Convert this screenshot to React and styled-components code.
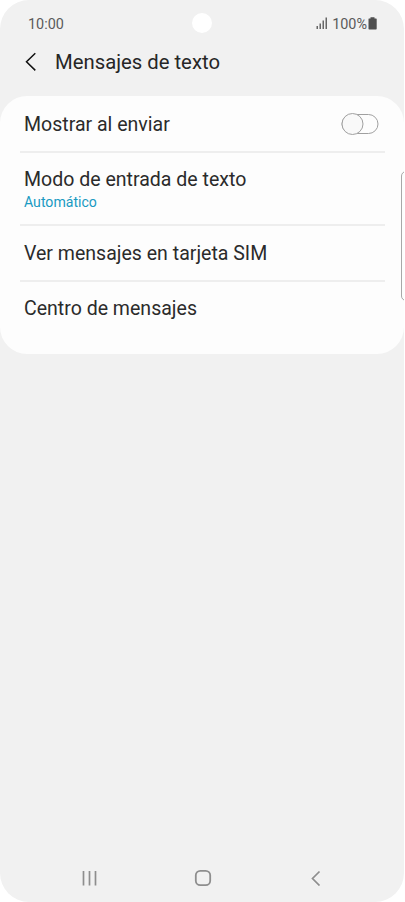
import React from 'react'
import styled, { createGlobalStyle } from 'styled-components'

const GlobalStyle = createGlobalStyle`
* {
    box-sizing: border-box;
}
body {
    margin: 0;
    background: #fff;
    font-family: Roboto, 'Liberation Sans', sans-serif;
}
`

const Phone = styled.div`
position: relative;
display: flex;
flex-direction: column;
width: 404px;
height: 902px;
overflow: hidden;
border-radius: 29px;
background: #f1f1f1;
`

const StatusBar = styled.div`
display: grid;
grid-template-columns: 1fr 20px 1fr;
align-items: center;
height: 46px;
padding: 0 27px 0 28px;
font-size: 14.4px;
line-height: 18px;
color: #5a5a5a;
`

const Time = styled.span`
padding-top: 3px;
`

const Camera = styled.div`
width: 20px;
height: 20px;
margin-left: -1px;
border-radius: 50%;
background: #fff;
`

const StatusIcons = styled.div`
display: flex;
align-items: center;
justify-content: flex-end;
svg {
    display: block;
}
`

const Percent = styled.span`
margin: 0 1px 0 4px;
padding-top: 3px;
`

const Header = styled.header`
display: flex;
align-items: center;
height: 50px;
padding: 0 24px 19px;
svg {
    display: block;
    margin-right: 18px;
}
`

const Title = styled.h1`
margin: 0;
font-size: 20.3px;
font-weight: 400;
line-height: 26px;
color: #262626;
`

const Card = styled.main`
height: 258px;
padding: 0 19px 0 20px;
border-radius: 27px;
background: #fdfdfd;
`

const Row = styled.div`
display: flex;
align-items: center;
justify-content: space-between;
height: ${props => props.$height};
padding: 1px 6px 0 4px;
border-bottom: ${props => props.$last ? 'none' : '2px solid #eee'};
`

const Label = styled.div`
padding-top: ${props => props.$drop || '0'};
font-size: 19.55px;
line-height: 24px;
color: #2b2b2b;
`

const Value = styled.div`
font-size: 14.1px;
line-height: 18px;
margin-top: 1px;
color: #1a9ac2;
`

const EdgeHandle = styled.div`
position: absolute;
top: 171px;
left: 401px;
width: 10px;
height: 130px;
border: 1px solid #a8a8a8;
border-radius: 5px;
`

const NavBar = styled.nav`
display: flex;
justify-content: space-between;
align-items: center;
height: 48px;
margin-top: auto;
padding: 0 79px 0 80px;
svg {
    display: block;
}
`

const App = () => {
  return (
    <>
        <GlobalStyle />
        <Phone>
            <StatusBar>
                <Time>10:00</Time>
                <Camera />
                <StatusIcons>
                    <svg width="12" height="12" viewBox="0 0 12 12" fill="#666">
                        <rect x="0.5" y="9" width="1.5" height="3" />
                        <rect x="3.5" y="6.5" width="1.5" height="5.5" />
                        <rect x="6.5" y="3.5" width="1.5" height="8.5" />
                        <rect x="9.5" y="0.5" width="1.5" height="11.5" />
                    </svg>
                    <Percent>100%</Percent>
                    <svg width="9" height="13" viewBox="0 0 9 13" fill="#4f4f4f">
                        <path d="M2.5 1.5V0.3h4v1.2H8q.7 0 .7.5v9.8q0 .7-.7.7H1.2q-.7 0-.7-.7V2q0-.5.5-.5z" />
                    </svg>
                </StatusIcons>
            </StatusBar>
            <Header>
                <svg width="13" height="20" viewBox="0 0 13 20" fill="none" stroke="#111" strokeWidth="1.5">
                    <path d="M11.3 1.2L2.5 9.8L11.3 18.4" />
                </svg>
                <Title>Mensajes de texto</Title>
            </Header>
            <Card>
                <Row $height="57px">
                    <Label $drop="2px">Mostrar al enviar</Label>
                    <svg width="38" height="22" viewBox="0 0 38 22" fill="none" stroke="#a0a0a0">
                        <rect x="1" y="1.5" width="36" height="19" rx="9.5" />
                        <circle cx="11.5" cy="11" r="10.5" fill="#f9f9f9" />
                    </svg>
                </Row>
                <Row $height="73px">
                    <div>
                        <Label $drop="1px">Modo de entrada de texto</Label>
                        <Value>Automático</Value>
                    </div>
                </Row>
                <Row $height="56px">
                    <Label>Ver mensajes en tarjeta SIM</Label>
                </Row>
                <Row $height="53px" $last>
                    <Label>Centro de mensajes</Label>
                </Row>
            </Card>
            <EdgeHandle />
            <NavBar>
                <svg width="19" height="16" viewBox="0 0 19 16" stroke="#8e8e8e" strokeWidth="1.7">
                    <path d="M3.5 1V15.5M9.5 1V15.5M15.5 1V15.5" />
                </svg>
                <svg width="18" height="18" viewBox="0 0 18 18" fill="none" stroke="#8e8e8e" strokeWidth="1.8">
                    <rect x="1.8" y="1.8" width="14.4" height="14.4" rx="4.5" />
                </svg>
                <svg width="19" height="16" viewBox="0 0 19 16" fill="none" stroke="#8e8e8e" strokeWidth="1.7">
                    <path d="M13.5 1.5L6.5 8.5L13.5 15.5" />
                </svg>
            </NavBar>
        </Phone>
    </>
  )
}

export default App
